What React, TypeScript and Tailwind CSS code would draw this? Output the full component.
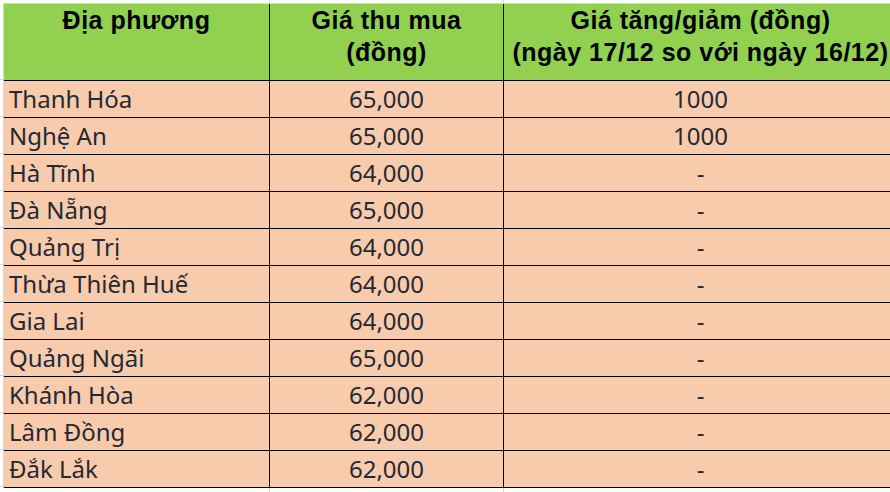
const ROWS: [string, string, string][] = [
  ['Thanh Hóa', '65,000', '1000'],
  ['Nghệ An', '65,000', '1000'],
  ['Hà Tĩnh', '64,000', '-'],
  ['Đà Nẵng', '65,000', '-'],
  ['Quảng Trị', '64,000', '-'],
  ['Thừa Thiên Huế', '64,000', '-'],
  ['Gia Lai', '64,000', '-'],
  ['Quảng Ngãi', '65,000', '-'],
  ['Khánh Hòa', '62,000', '-'],
  ['Lâm Đồng', '62,000', '-'],
  ['Đắk Lắk', '62,000', '-'],
]

const head = "font-['Liberation_Sans',Arial,sans-serif] font-bold text-[25px] leading-[32px] tracking-[0.5px] text-black text-center"
const body = "font-['Noto_Sans',sans-serif] text-[24px] leading-[36px] text-[#242932]"

export default function App() {
  return (
    <div className="w-[890px] h-[492px] overflow-hidden bg-white">
      <div className="flex">
        {/* row-header gutter with faint gridline stubs */}
        <div className="w-[3px] shrink-0 flex flex-col">
          <div className="h-[3px]" />
          <div className="h-[77px] border-b border-[#d4d4d4]" />
          {ROWS.map((_, i) => (
            <div key={i} className="h-[37px] border-b border-[#d4d4d4]" />
          ))}
        </div>

        <div className="flex flex-col w-[900px] shrink-0">
          <div className="flex h-[3px]">
            <div className="w-[267px] border-r border-[#d4d4d4]" />
            <div className="w-[234px] border-r border-[#d4d4d4]" />
            <div className="w-[393px]" />
          </div>
          <div className="border-l border-t border-[#d4d4d4]">
            <div className="flex h-[77px] bg-[#92d050] border-b border-black">
              <div className={`w-[266px] border-r border-black ${head}`}>Địa phương</div>
              <div className={`w-[234px] border-r border-black ${head}`}>
                Giá thu mua
                <br />
                (đồng)
              </div>
              <div className={`w-[393px] ${head}`}>
                Giá tăng/giảm (đồng)
                <br />
                (ngày 17/12 so với ngày 16/12)
              </div>
            </div>
            {ROWS.map(([place, price, diff]) => (
              <div key={place} className="flex h-[37px] bg-[#f8cbad] border-b border-black">
                <div className={`w-[266px] border-r border-black pl-[5px] ${body}`}>{place}</div>
                <div className={`w-[234px] border-r border-black text-center ${body}`}>{price}</div>
                <div className={`w-[393px] text-center ${body}`}>{diff}</div>
              </div>
            ))}
          </div>
          <div className="flex h-[10px]">
            <div className="w-[267px] border-r border-[#d4d4d4]" />
            <div className="w-[234px] border-r border-[#d4d4d4]" />
            <div className="w-[393px]" />
          </div>
        </div>
      </div>
    </div>
  )
}
